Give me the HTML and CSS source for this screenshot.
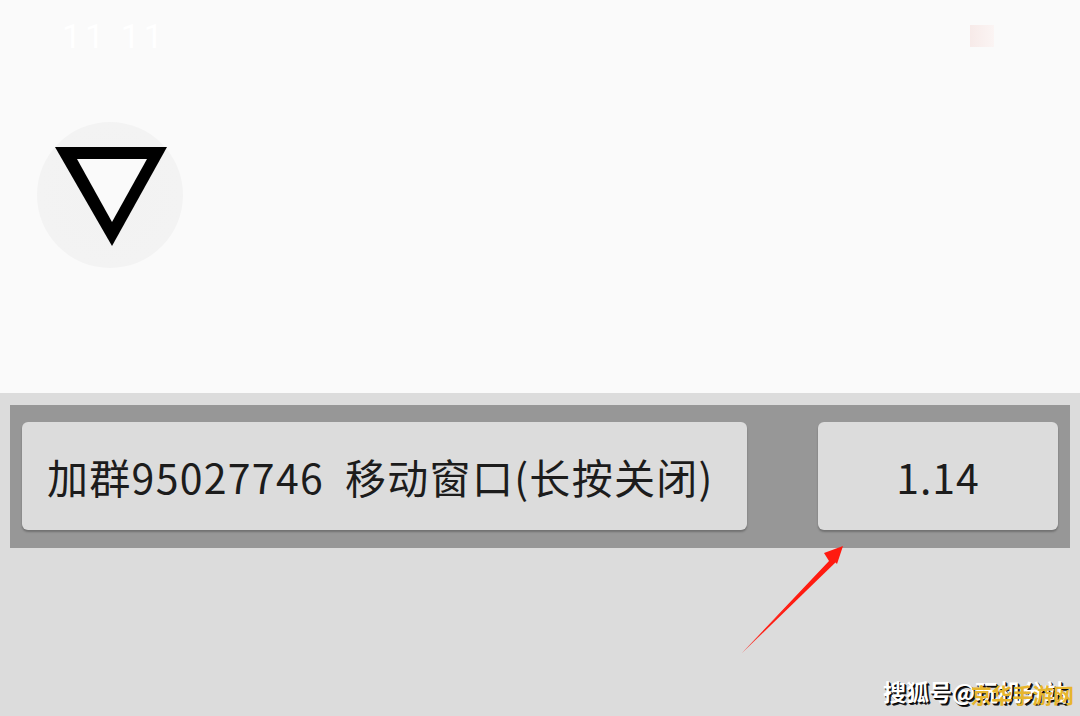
FILE: index.html
```html
<!DOCTYPE html>
<html lang="zh">
<head>
<meta charset="utf-8">
<link rel="stylesheet" href="styles.css">
</head>
<body>
<div class="screen">
  <section class="top">
    <div class="status">
      <span class="clock">11 11</span>
      <span class="battery"></span>
    </div>
    <div class="fab">
      <svg class="tri" width="150" height="150" viewBox="0 0 150 150">
        <polygon points="18,25 130,25 75,124 " fill="#000"/>
        <polygon points="40,37 110,37 75,100" fill="#fafafa"/>
      </svg>
    </div>
  </section>
  <section class="bottom">
    <div class="bar">
      <div class="btn btn-main">加群95027746&nbsp;&nbsp;移动窗口(长按关闭)</div>
      <div class="btn btn-ver">1.14</div>
    </div>
  </section>
  <svg class="arrow" width="1080" height="716" viewBox="0 0 1080 716">
    <polygon points="742,653 829,561 824,553 843,546 837,564 833,560" fill="#ff1a10"/>
    <polygon points="742,653 836,556 838,560" fill="#ff1a10"/>
  </svg>
  <div class="mark">
    <span class="mark-white">搜狐号@玩机分站</span>
    <span class="mark-gold">京华手游网</span>
  </div>
</div>
</body>
</html>
```

FILE: styles.css
```css
html, body {
  margin: 0;
  padding: 0;
}
body {
  width: 1080px;
  height: 716px;
  overflow: hidden;
  font-family: "Noto Sans CJK SC", "Noto Sans", sans-serif;
}
.screen {
  position: relative;
  width: 1080px;
  height: 716px;
  display: flex;
  flex-direction: column;
}
.top {
  height: 393px;
  background: #fafafa;
  display: flex;
  flex-direction: column;
}
.status {
  height: 72px;
  display: flex;
  justify-content: space-between;
  align-items: center;
  padding: 0 86px 0 62px;
}
.clock {
  color: #ffffff;
  font-size: 34px;
  font-family: "Roboto", sans-serif;
  letter-spacing: 4px;
}
.battery {
  width: 24px;
  height: 22px;
  background: linear-gradient(90deg, #f6e6e4, #fbf3f2);
  opacity: 0.8;
}
.fab {
  margin: 50px 0 0 37px;
  width: 146px;
  height: 146px;
  border-radius: 50%;
  background: radial-gradient(circle, #f2f2f2 0%, #f3f3f3 70%, #f6f6f6 90%, #fafafa 100%);
  position: relative;
}
.tri {
  position: absolute;
  left: 0;
  top: 0;
}
.bottom {
  flex: 1;
  background: #dcdcdc;
  padding: 12px 10px 0 10px;
}
.bar {
  height: 143px;
  background: #979797;
  display: flex;
  align-items: flex-start;
  padding: 17px 12px 0 12px;
  box-sizing: border-box;
  gap: 71px;
}
.btn {
  height: 108px;
  background: #dcdcdc;
  border-radius: 6px;
  box-shadow: 0 2px 2px rgba(0, 0, 0, 0.25);
  display: flex;
  align-items: center;
  color: #1c1c1c;
  font-size: 41px;
  box-sizing: border-box;
}
.btn-main {
  width: 725px;
  padding-left: 25px;
  letter-spacing: 1.3px;
}
.btn-ver {
  width: 240px;
  justify-content: center;
  letter-spacing: 1px;
}
.arrow {
  position: absolute;
  left: 0;
  top: 0;
  pointer-events: none;
}
.mark {
  position: absolute;
  left: 883px;
  top: 676px;
  font-size: 23px;
  font-weight: bold;
  white-space: nowrap;
  line-height: 30px;
}
.mark-white {
  color: #ffffff;
  text-shadow: 1px 1px 0 #000, 2px 2px 0 #222;
}
.mark-gold {
  position: absolute;
  left: 88px;
  top: 3px;
  color: #e7b52c;
  font-size: 21px;
  letter-spacing: -0.5px;
}
```
